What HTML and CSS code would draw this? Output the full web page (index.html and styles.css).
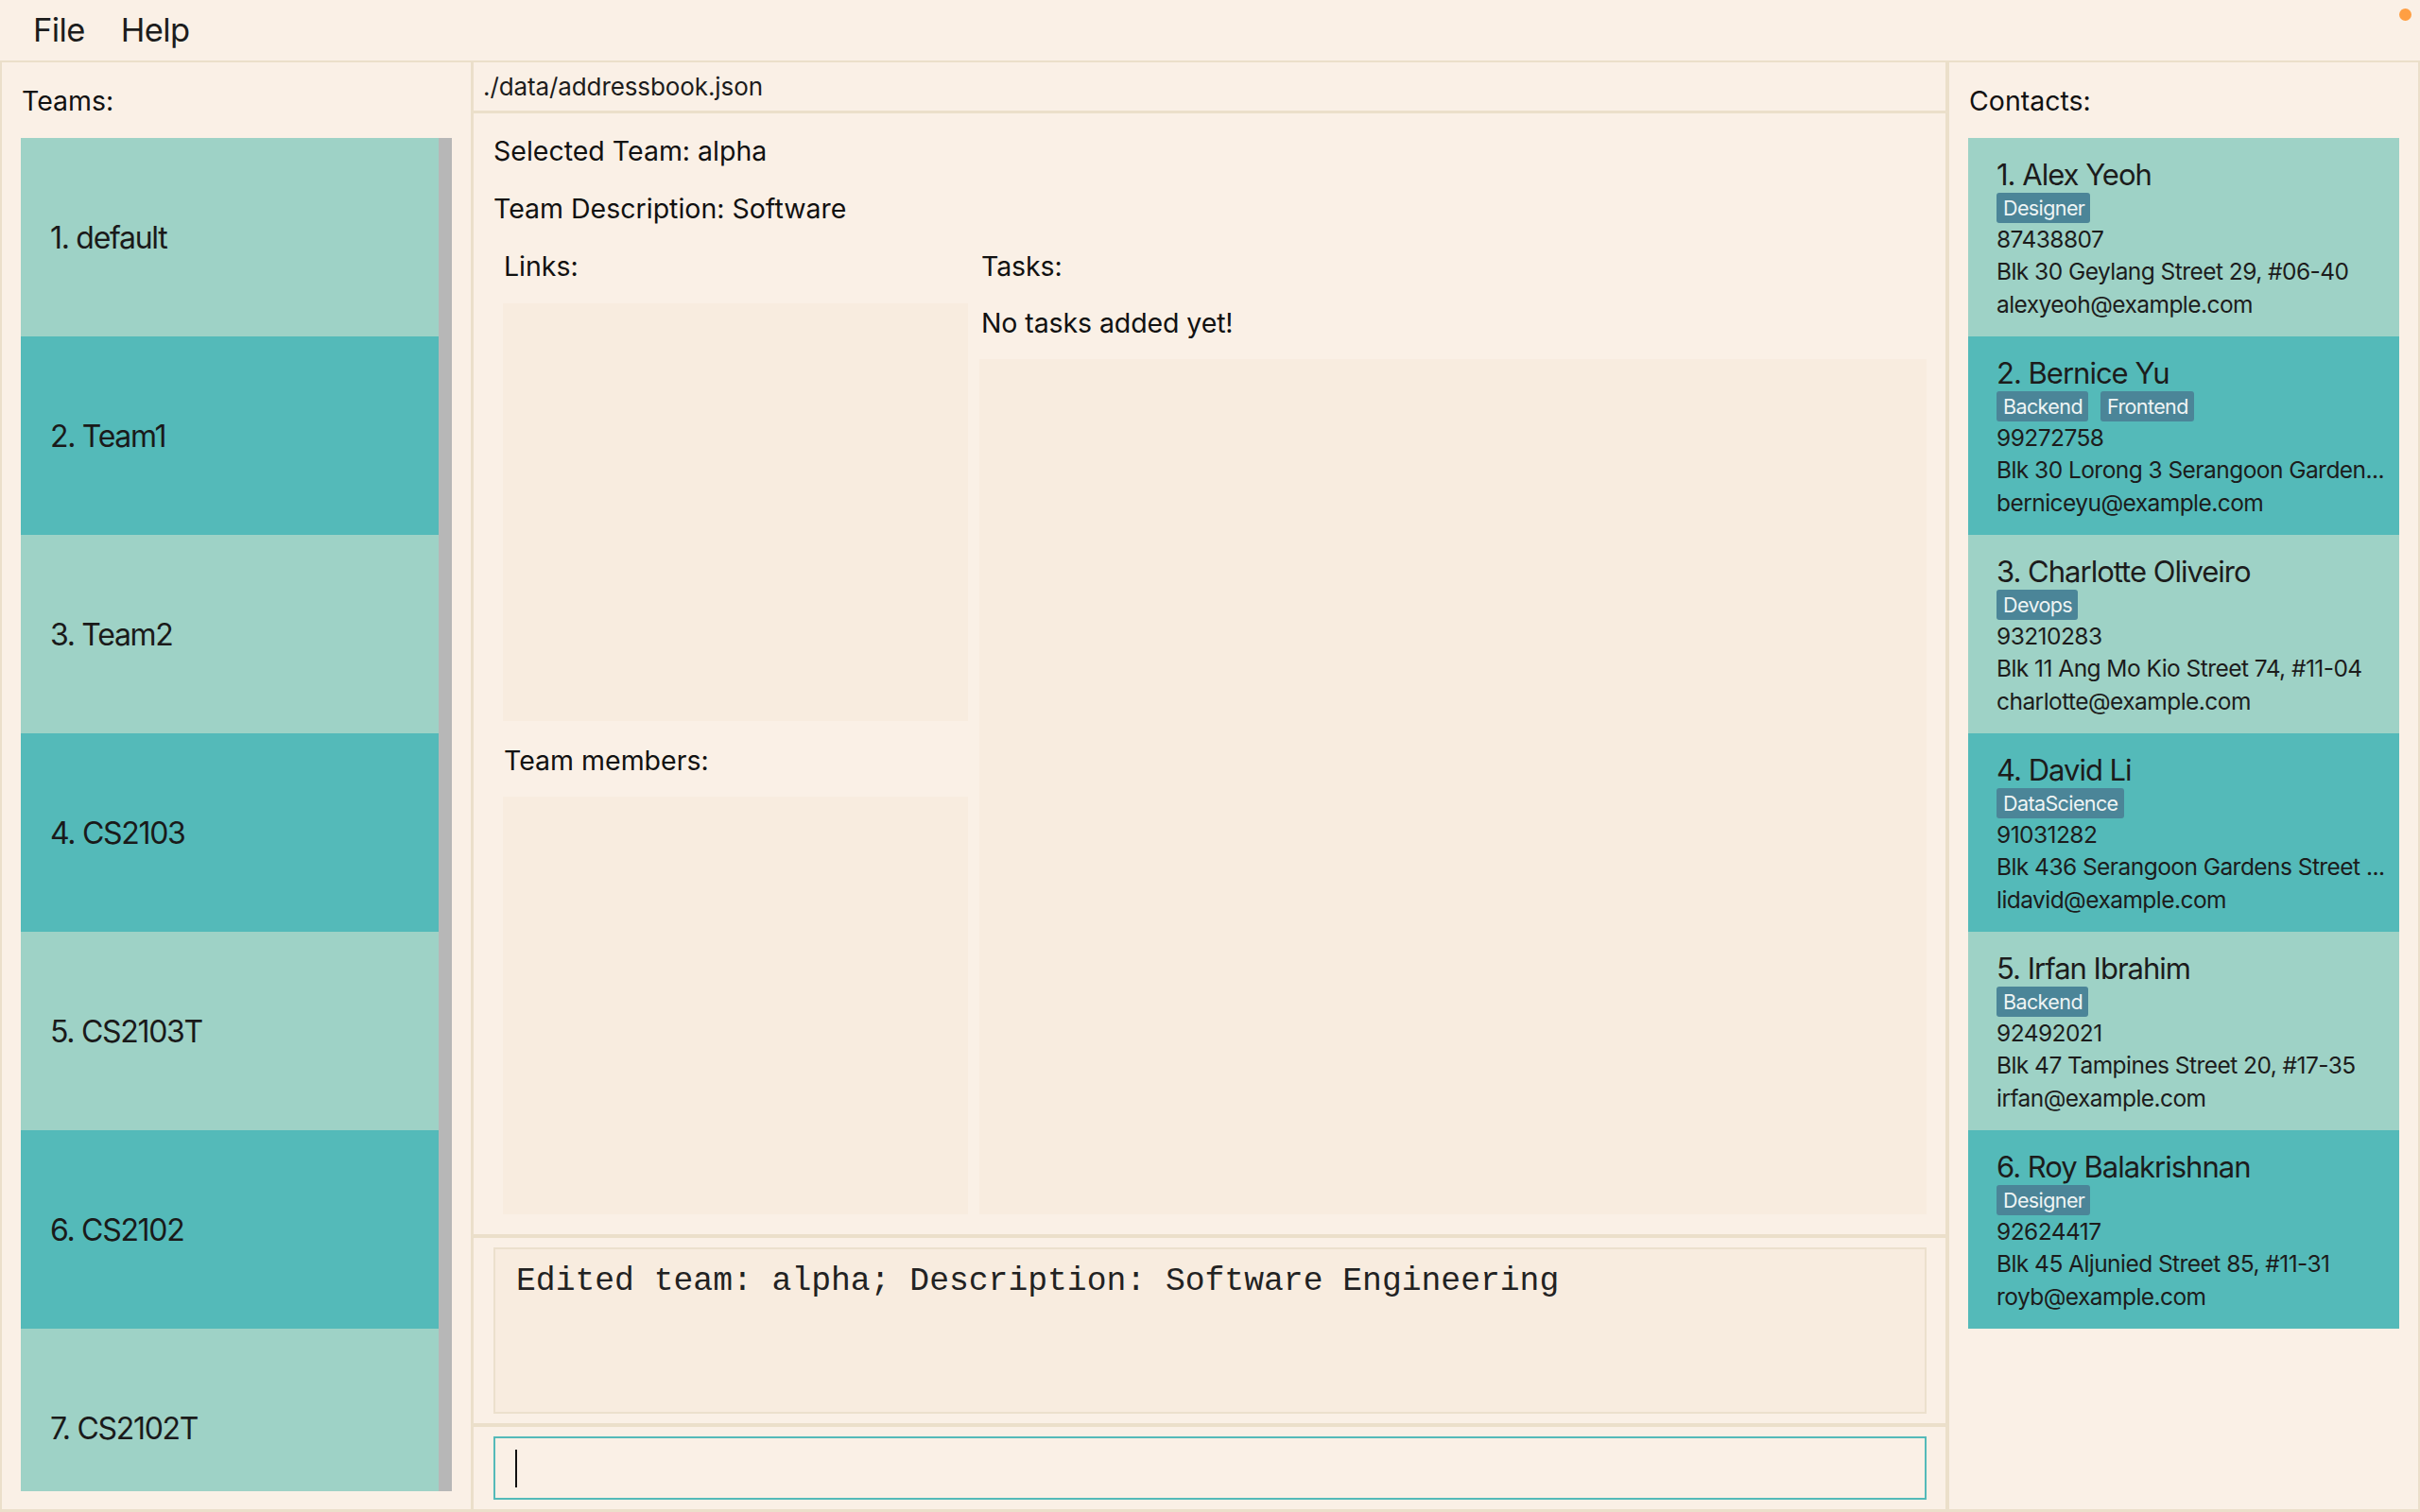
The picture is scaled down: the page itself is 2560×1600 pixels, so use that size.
FILE: index.html
```html
<!DOCTYPE html>
<html lang="en">
<head>
<meta charset="utf-8">
<title>Address Book</title>
<link rel="stylesheet" href="styles.css">
</head>
<body>
<div class="app">
  <header class="menubar">
    <span class="menu-item">File</span>
    <span class="menu-item">Help</span>
    <span class="status-dot"></span>
  </header>
  <main class="main">
    <aside class="side side-left">
      <div class="panel-title">Teams:</div>
      <div class="team-list">
        <div class="team-items">
          <div class="team-item odd">1. default</div>
          <div class="team-item even">2. Team1</div>
          <div class="team-item odd">3. Team2</div>
          <div class="team-item even">4. CS2103</div>
          <div class="team-item odd">5. CS2103T</div>
          <div class="team-item even">6. CS2102</div>
          <div class="team-item odd">7. CS2102T</div>
        </div>
        <div class="scrollbar"></div>
      </div>
    </aside>

    <section class="center">
      <div class="pathbar">./data/addressbook.json</div>
      <div class="detail">
        <div class="detail-line">Selected Team: alpha</div>
        <div class="detail-line">Team Description: Software</div>
        <div class="cols">
          <div class="col-links">
            <div class="col-label">Links:</div>
            <div class="box box-links"></div>
            <div class="col-label label-members">Team members:</div>
            <div class="box box-members"></div>
          </div>
          <div class="col-tasks">
            <div class="col-label">Tasks:</div>
            <div class="col-label tasks-empty">No tasks added yet!</div>
            <div class="box box-tasks"></div>
          </div>
        </div>
      </div>
      <div class="result">
        <div class="result-box">Edited team: alpha; Description: Software Engineering</div>
      </div>
      <div class="command">
        <div class="command-box"><span class="caret"></span></div>
      </div>
    </section>

    <aside class="side side-right">
      <div class="panel-title">Contacts:</div>
      <div class="contact-list">
        <div class="card odd">
          <div class="card-name">1. Alex Yeoh</div>
          <div class="tags"><span class="tag">Designer</span></div>
          <div class="card-line">87438807</div>
          <div class="card-line">Blk 30 Geylang Street 29, #06-40</div>
          <div class="card-line">alexyeoh@example.com</div>
        </div>
        <div class="card even">
          <div class="card-name">2. Bernice Yu</div>
          <div class="tags"><span class="tag">Backend</span><span class="tag">Frontend</span></div>
          <div class="card-line">99272758</div>
          <div class="card-line">Blk 30 Lorong 3 Serangoon Garden...</div>
          <div class="card-line">berniceyu@example.com</div>
        </div>
        <div class="card odd">
          <div class="card-name">3. Charlotte Oliveiro</div>
          <div class="tags"><span class="tag">Devops</span></div>
          <div class="card-line">93210283</div>
          <div class="card-line">Blk 11 Ang Mo Kio Street 74, #11-04</div>
          <div class="card-line">charlotte@example.com</div>
        </div>
        <div class="card even">
          <div class="card-name">4. David Li</div>
          <div class="tags"><span class="tag">DataScience</span></div>
          <div class="card-line">91031282</div>
          <div class="card-line">Blk 436 Serangoon Gardens Street ...</div>
          <div class="card-line">lidavid@example.com</div>
        </div>
        <div class="card odd">
          <div class="card-name">5. Irfan Ibrahim</div>
          <div class="tags"><span class="tag">Backend</span></div>
          <div class="card-line">92492021</div>
          <div class="card-line">Blk 47 Tampines Street 20, #17-35</div>
          <div class="card-line">irfan@example.com</div>
        </div>
        <div class="card even">
          <div class="card-name">6. Roy Balakrishnan</div>
          <div class="tags"><span class="tag">Designer</span></div>
          <div class="card-line">92624417</div>
          <div class="card-line">Blk 45 Aljunied Street 85, #11-31</div>
          <div class="card-line">royb@example.com</div>
        </div>
      </div>
    </aside>
  </main>
</div>
</body>
</html>
```
FILE: styles.css
```css
* { box-sizing: border-box; }

html, body {
  margin: 0;
  padding: 0;
}

body {
  width: 2560px;
  height: 1600px;
  overflow: hidden;
  background: #faf0e6;
  color: #1b1b1b;
  font-family: Inter, "Noto Sans", "Liberation Sans", sans-serif;
}

.app {
  position: relative;
  width: 2560px;
  height: 1600px;
  display: flex;
  flex-direction: column;
}

/* ---------- menu bar ---------- */
.menubar {
  position: relative;
  height: 66px;
  flex-shrink: 0;
  display: flex;
  gap: 38px;
  padding-left: 35px;
  border-bottom: 2px solid #ebdfca;
  font-size: 34.5px;
  letter-spacing: -0.6px;
  line-height: 64px;
  color: #1c1c1c;
}

.status-dot {
  position: absolute;
  top: 9px;
  right: 9px;
  width: 13px;
  height: 13px;
  border-radius: 50%;
  background: #ff9f43;
}

/* ---------- main columns ---------- */
.main {
  flex: 1;
  display: flex;
  min-height: 0;
}

.side {
  width: 500px;
  flex-shrink: 0;
  display: flex;
  flex-direction: column;
  padding: 21px 20px 19px 20px;
  border-left: 2px solid #ebdfca;
  border-right: 2px solid #ebdfca;
  border-bottom: 3px solid #ebdfca;
}

.panel-title {
  font-size: 28.5px;
  line-height: 40px;
  margin-bottom: 19px;
  padding-left: 1px;
  color: #111;
}

/* ---------- teams ---------- */
.team-list {
  flex: 1;
  display: flex;
  overflow: hidden;
  min-height: 0;
}

.team-items {
  width: 442px;
  display: flex;
  flex-direction: column;
}

.team-item {
  height: 210px;
  flex-shrink: 0;
  display: flex;
  align-items: center;
  padding-left: 31px;
  padding-top: 2px;
  font-size: 32px;
  letter-spacing: -1.3px;
  line-height: 1;
  color: #1a1a1a;
}

.odd { background: #9ed2c6; }
.even { background: #54bab9; }

.scrollbar {
  width: 14px;
  background: #b7b7b7;
}

/* ---------- center ---------- */
.center {
  flex: 1;
  display: flex;
  flex-direction: column;
  min-width: 0;
  border-left: 1px solid #ebdfca;
  border-right: 2px solid #ebdfca;
  border-bottom: 3px solid #ebdfca;
}

.pathbar {
  height: 54px;
  flex-shrink: 0;
  padding: 1px 0 0 10px;
  font-size: 26px;
  letter-spacing: -0.1px;
  line-height: 50px;
  border-bottom: 3px solid #ebdfca;
  color: #1c1c1c;
}

.detail {
  height: 1190px;
  flex-shrink: 0;
  display: flex;
  flex-direction: column;
  padding: 10px 20px 21px 21px;
  border-bottom: 4px solid #ebdfca;
}

.detail-line {
  font-size: 28.5px;
  line-height: 60.5px;
  color: #111;
}

.cols {
  flex: 1;
  display: flex;
  gap: 12px;
  padding-left: 10px;
  min-height: 0;
}

.col-links {
  width: 492px;
  display: flex;
  flex-direction: column;
}

.col-tasks {
  flex: 1;
  display: flex;
  flex-direction: column;
}

.col-label {
  font-size: 28.5px;
  line-height: 41px;
  padding-top: 10px;
  margin-bottom: 19px;
  padding-left: 1px;
  color: #111;
}

.col-tasks .col-label { padding-left: 2px; letter-spacing: -0.1px; }

.label-members {
  padding-top: 0;
  margin-top: 21px;
  margin-bottom: 18px;
}

.tasks-empty {
  padding-top: 0;
  margin-bottom: 18px;
}

.box {
  background: #f8ecdf;
}

.box-links { height: 442px; flex-shrink: 0; }
.box-members { flex: 1; }
.box-tasks { flex: 1; }

/* ---------- result ---------- */
.result {
  height: 200px;
  flex-shrink: 0;
  padding: 10px 20px 10px 21px;
  border-bottom: 4px solid #ebdfca;
}

.result-box {
  height: 176px;
  border: 2px solid #ece0cd;
  background: #f8ecdf;
  padding: 14px 0 0 22px;
  font-family: "Liberation Mono", "DejaVu Sans Mono", monospace;
  font-size: 34.7px;
  line-height: 40px;
  color: #222;
  white-space: pre;
}

/* ---------- command ---------- */
.command {
  flex: 1;
  padding: 10px 20px 10px 21px;
}

.command-box {
  height: 67px;
  border: 2px solid #54bab9;
  background: #faf0e6;
  padding: 12px 0 0 21px;
}

.caret {
  display: block;
  width: 2px;
  height: 40px;
  background: #111;
}

/* ---------- contacts ---------- */
.contact-list {
  display: flex;
  flex-direction: column;
}

.card {
  height: 210px;
  flex-shrink: 0;
  padding: 20px 16px 0 30px;
  color: #1c1c1c;
  overflow: hidden;
}

.card-name {
  font-size: 31px;
  letter-spacing: -1px;
  line-height: 38px;
  white-space: nowrap;
}

.tags {
  display: flex;
  gap: 13px;
  height: 32px;
}

.tag {
  height: 32px;
  padding: 0 6px 0 7px;
  border-radius: 3px;
  background: #4b8598;
  color: #eef4f4;
  font-size: 21.5px;
  letter-spacing: -0.6px;
  line-height: 32px;
}

.card-line {
  font-size: 24.5px;
  letter-spacing: -0.55px;
  line-height: 34.3px;
  white-space: nowrap;
}
```
